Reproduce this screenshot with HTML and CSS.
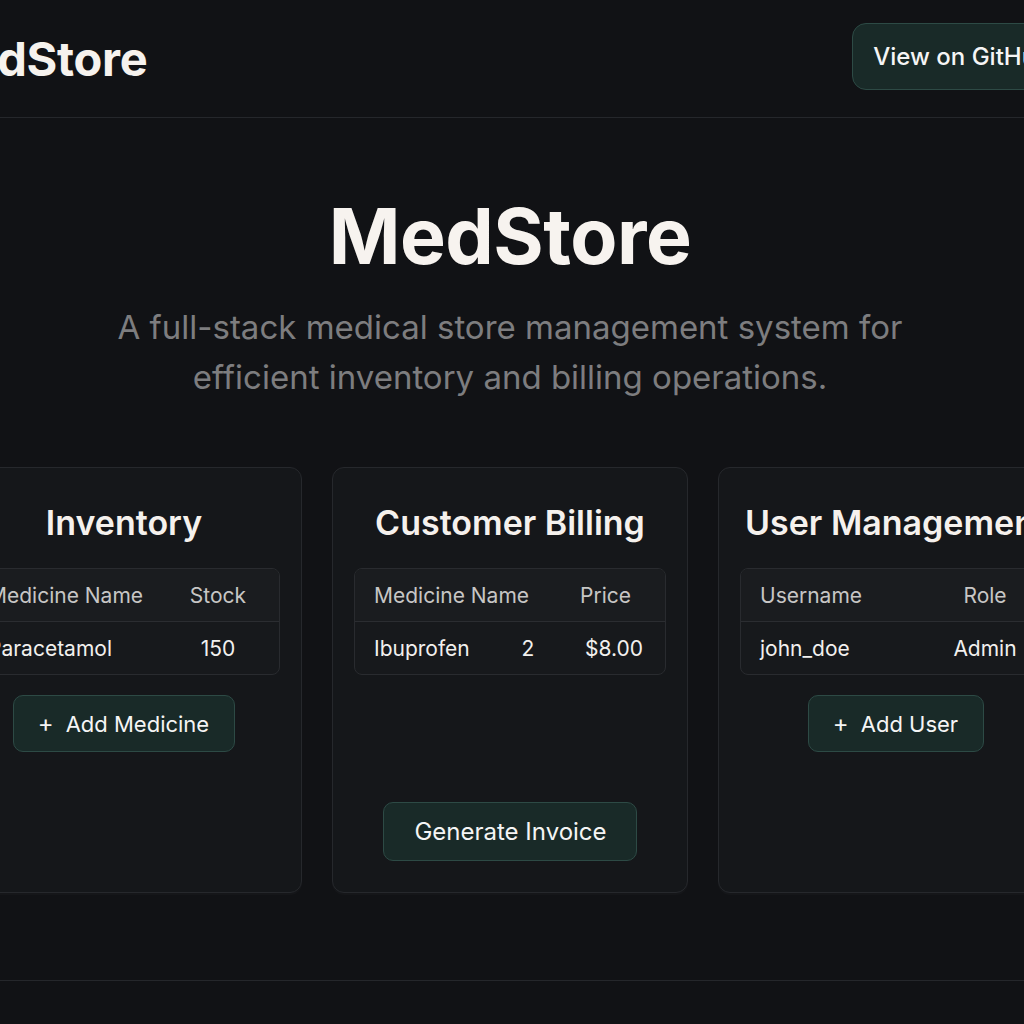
FILE: index.html
```html
<!DOCTYPE html>
<html lang="en">
<head>
<meta charset="utf-8">
<title>MedStore</title>
<link rel="stylesheet" href="styles.css">
</head>
<body>
<div class="page">
  <header class="topbar">
    <div class="logo">MedStore</div>
    <a class="btn btn-top" href="#">View on GitHub</a>
  </header>
  <section class="hero">
    <h1>MedStore</h1>
    <p>A full-stack medical store management system for<br>efficient inventory and billing operations.</p>
  </section>
  <section class="cards">
    <div class="card">
      <h2>Inventory</h2>
      <div class="table">
        <div class="row head two"><span>Medicine Name</span><span class="c">Stock</span></div>
        <div class="row two"><span>Paracetamol</span><span class="c">150</span></div>
      </div>
      <a class="btn btn-card" href="#"><span class="plus">+</span>Add Medicine</a>
    </div>
    <div class="card">
      <h2>Customer Billing</h2>
      <div class="table">
        <div class="row head bill-head"><span>Medicine Name</span><span>Price</span></div>
        <div class="row bill"><span>Ibuprofen</span><span class="c">2</span><span class="r">$8.00</span></div>
      </div>
      <a class="btn btn-card btn-bottom" href="#">Generate Invoice</a>
    </div>
    <div class="card">
      <h2>User Management</h2>
      <div class="table">
        <div class="row head two user"><span>Username</span><span class="c">Role</span></div>
        <div class="row two user"><span>john_doe</span><span class="c">Admin</span></div>
      </div>
      <a class="btn btn-card" href="#"><span class="plus">+</span>Add User</a>
    </div>
  </section>
  <footer class="footer"></footer>
</div>
</body>
</html>
```
FILE: styles.css
```css
html, body {
  margin: 0;
  padding: 0;
  background: #111215;
  overflow: hidden;
}
body {
  font-family: Inter, "Noto Sans", sans-serif;
  color: #f3efec;
  height: 1024px;
}
.page {
  width: 1140px;
  margin-left: -60px;
}
.topbar {
  height: 117px;
  display: flex;
  align-items: center;
  justify-content: space-between;
  padding: 0 6px 0 0;
  border-bottom: 1px solid #25272b;
}
.logo {
  font-size: 47px;
  font-weight: 700;
  letter-spacing: -0.3px;
  color: #f6f2ee;
  margin-left: -14px;
}
.btn {
  display: inline-flex;
  align-items: center;
  justify-content: center;
  text-decoration: none;
  color: #f5f5f5;
  background: #192a28;
  border: 1.5px solid #2d4a45;
  box-sizing: border-box;
}
.btn-top {
  height: 67px;
  padding: 0 22px 0 20px;
  border-radius: 14px;
  font-size: 24px;
  font-weight: 500;
  margin-top: -5px;
}
.hero {
  text-align: center;
  padding-top: 70px;
}
.hero h1 {
  margin: 0;
  font-size: 77px;
  font-weight: 700;
  letter-spacing: -0.5px;
  line-height: 96px;
  color: #f7f3ef;
}
.hero p {
  margin: 18px 0 0;
  font-size: 33px;
  line-height: 50px;
  color: #7d7d7f;
}
.cards {
  display: flex;
  justify-content: center;
  gap: 30px;
  margin-top: 65px;
}
.card {
  width: 356px;
  height: 426px;
  box-sizing: border-box;
  background: #15171a;
  border: 1px solid #26282c;
  border-radius: 12px;
  padding: 33px 22px 31px;
  display: flex;
  flex-direction: column;
  align-items: center;
  box-shadow: 0 2px 0 rgba(255,255,255,0.02);
}
.card h2 {
  margin: 0 0 1px;
  font-size: 34px;
  font-weight: 600;
  line-height: 44px;
  white-space: nowrap;
  color: #f5f1ed;
}
.table {
  width: 100%;
  margin-top: 22px;
  border: 1px solid #292b2f;
  border-radius: 8px;
  background: #17191c;
  overflow: hidden;
}
.row {
  height: 52px;
  display: grid;
  align-items: center;
  padding: 0 19px;
  font-size: 21px;
  color: #f2f0ee;
}
.row.head {
  background: #1a1c1f;
  border-bottom: 1px solid #2b2d31;
  color: #c7c6c5;
}
.row.two {
  grid-template-columns: 1fr 90px;
  padding-right: 16px;
}
.row.two.user {
  grid-template-columns: 1fr 100px;
  padding-right: 16px;
}
.row.bill-head {
  grid-template-columns: 1fr 70px;
  padding-right: 15px;
}
.row.bill {
  grid-template-columns: 1fr 50px 90px;
  padding-right: 22px;
}
.c { text-align: center; }
.r { text-align: right; }
.btn-card {
  margin-top: 20px;
  height: 57px;
  padding: 0 25px 0 24px;
  border-radius: 10px;
  font-size: 22px;
}
.btn-bottom {
  margin-top: auto;
  height: 59px;
  padding: 0 29px 0 30px;
  font-size: 24px;
}
.plus {
  font-size: 24px;
  margin-right: 12px;
  font-weight: 400;
}
.footer {
  margin-top: 87px;
  border-top: 1px solid #25272b;
  height: 40px;
}
```
